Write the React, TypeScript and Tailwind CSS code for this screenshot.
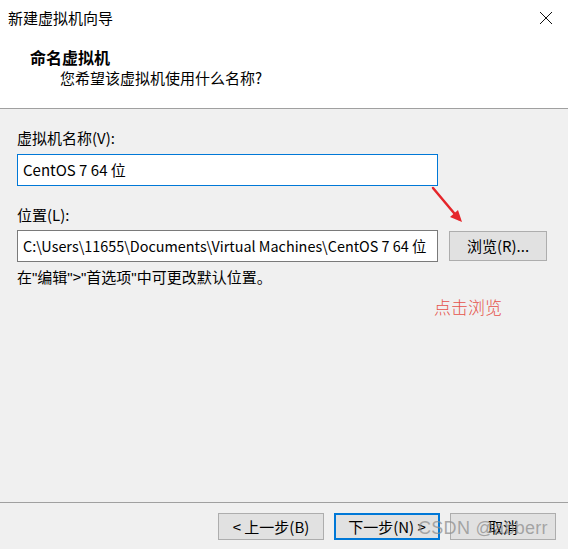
import React from "react";

const font = { fontFamily: '"Noto Sans CJK SC", "Noto Sans", sans-serif' };
const q = { fontFamily: '"Liberation Sans", sans-serif' };

export default function App() {
  return (
    <div
      className="relative w-[568px] h-[549px] overflow-hidden bg-[#f0f0f0] text-black flex flex-col text-[15px]"
      style={font}
    >
      {/* Header */}
      <div className="bg-white h-[109px] border-b border-[#a0a0a0] flex flex-col shrink-0">
        <div className="h-[36px] flex items-center justify-between pl-[8px] pr-[15px]">
          <span className="leading-[20px] text-[15px]">新建虚拟机向导</span>
          <svg width="14" height="14" viewBox="0 0 14 14">
            <path d="M1 1 L13 13 M13 1 L1 13" stroke="#111" strokeWidth="1" fill="none" />
          </svg>
        </div>
        <div className="pl-[30px] mt-[11px] leading-[20px] font-bold text-[16px]">命名虚拟机</div>
        <div className="pl-[60px] mt-[1px] leading-[20px]">您希望该虚拟机使用什么名称?</div>
      </div>

      {/* Body */}
      <div className="flex-1 flex flex-col px-[17px] pt-[19px]">
        <div className="leading-[20px]">虚拟机名称(V):</div>
        <div className="mt-[6px] w-[421px] h-[32px] border border-[#0078d7] bg-white flex items-center pl-[5px] leading-[20px]">
          CentOS 7 64 位
        </div>
        <div className="mt-[19px] leading-[20px]">位置(L):</div>
        <div className="mt-[5px] flex items-center">
          <div className="w-[421px] h-[32px] border border-[#7a7a7a] bg-white flex items-center pl-[5px] leading-[20px] whitespace-nowrap overflow-hidden text-[14.4px]">
            C:\Users\11655\Documents\Virtual Machines\CentOS 7 64 位
          </div>
          <div className="ml-[11px] w-[98px] h-[30px] border border-[#adadad] bg-[#e1e1e1] flex items-center justify-center leading-[20px]">
            浏览(R)...
          </div>
        </div>
        <div className="mt-[5px] leading-[20px]">
          在<span style={q}>"</span>编辑<span style={q}>"</span>&gt;<span style={q}>"</span>首选项<span style={q}>"</span>中可更改默认位置。
        </div>
      </div>

      {/* Footer */}
      <div className="h-[47px] border-t border-[#a0a0a0] flex justify-end items-start pt-[10px] pr-[12px] gap-[10px] shrink-0">
        <div className="w-[106px] h-[27px] border border-[#adadad] bg-[#e1e1e1] flex items-center justify-center leading-[20px]">
          &lt; 上一步(B)
        </div>
        <div className="w-[106px] h-[27px] border-2 border-[#0078d7] bg-[#e1e1e1] flex items-center justify-center leading-[20px]">
          下一步(N) &gt;
        </div>
        <div className="w-[106px] h-[27px] border border-[#adadad] bg-[#e1e1e1] flex items-center justify-center leading-[20px]">
          取消
        </div>
      </div>

      {/* Annotations */}
      <svg className="absolute left-[428px] top-[184px]" width="40" height="44" viewBox="0 0 40 44">
        <path d="M5 4 L31 35" stroke="#e5252a" strokeWidth="2.5" strokeLinecap="round" />
        <path d="M34 38 L22 33 L30 26 Z" fill="#e5252a" />
      </svg>
      <div className="absolute left-[434px] top-[296px] text-[17px] leading-[22px] text-[#e5534b] font-light">
        点击浏览
      </div>
      <div
        className="absolute left-[418px] top-[515px] text-[18px] leading-[26px] text-[#8f8f8f]/75 whitespace-nowrap tracking-[0.3px]"
        style={{ fontFamily: '"Liberation Sans", "Noto Sans", sans-serif' }}
      >
        CSDN @abberr
      </div>
    </div>
  );
}
